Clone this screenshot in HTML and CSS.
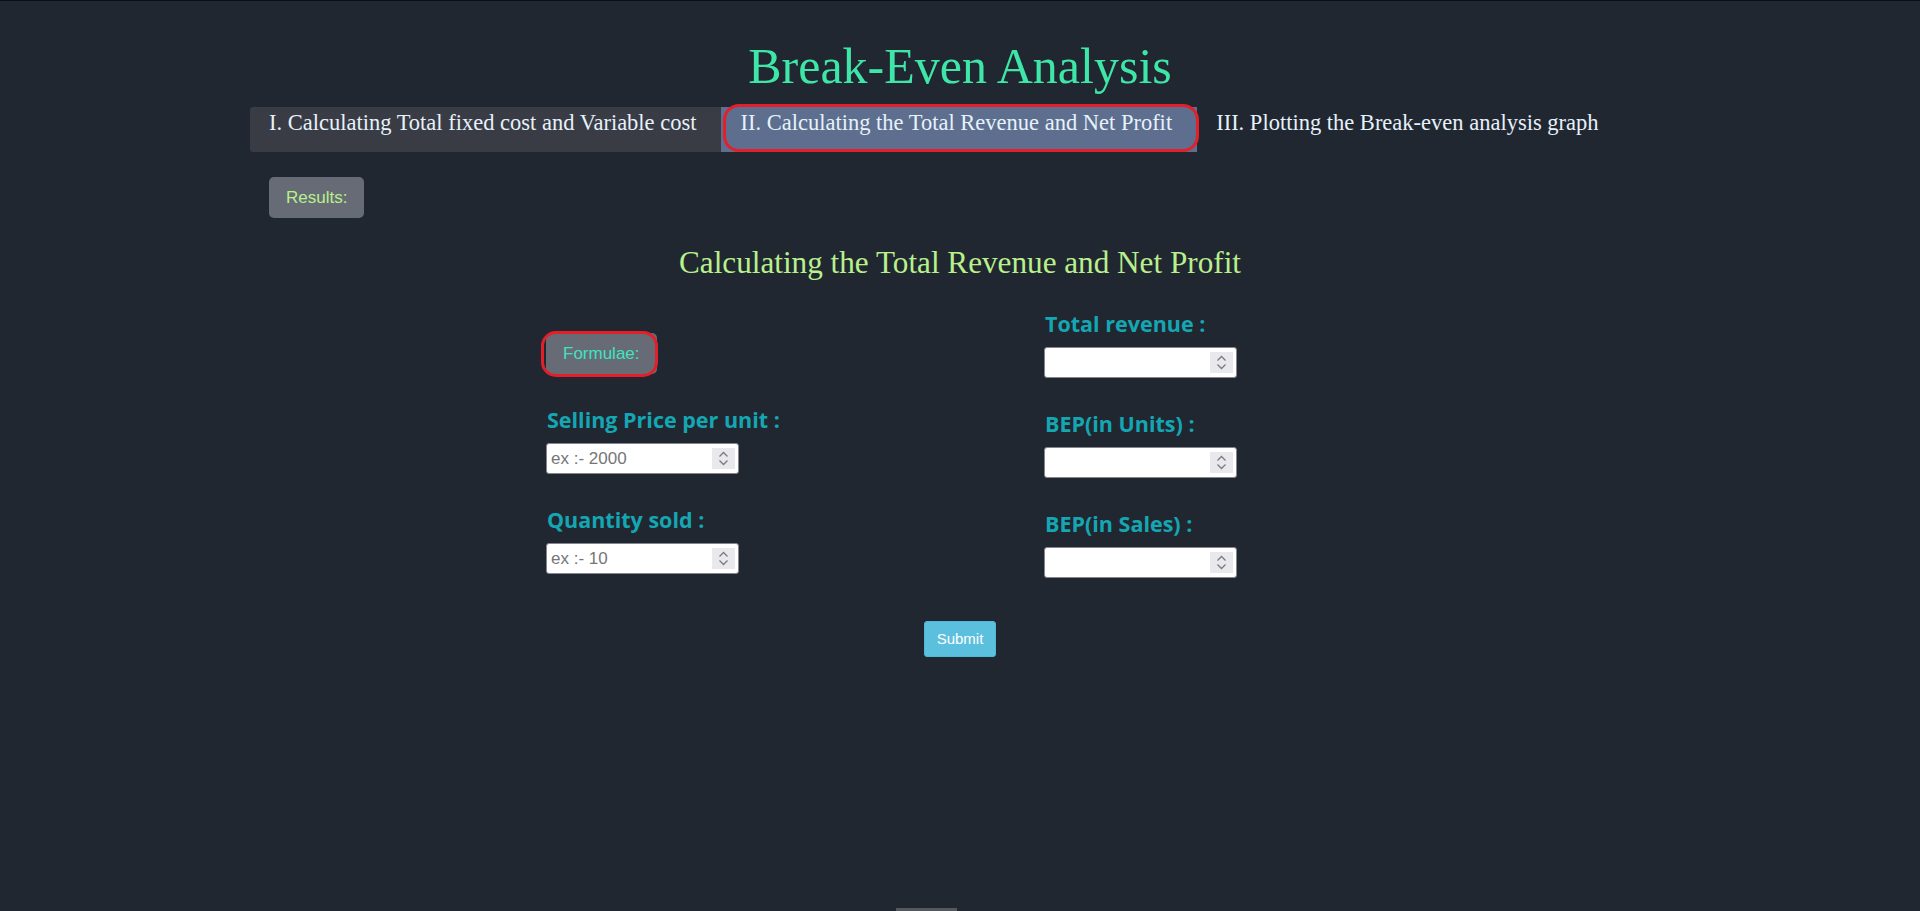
FILE: index.html
```html
<!DOCTYPE html>
<html lang="en">
<head>
<meta charset="utf-8">
<title>Break-Even Analysis</title>
<link rel="stylesheet" href="styles.css">
</head>
<body>
<div class="page">
  <h1 class="title">Break-Even Analysis</h1>
  <ul class="tabs">
    <li class="tab tab-done">I. Calculating Total fixed cost and Variable cost</li>
    <li class="tab tab-active">II. Calculating the Total Revenue and Net Profit</li>
    <li class="tab">III. Plotting the Break-even analysis graph</li>
  </ul>
  <div class="results-row">
    <span class="pill pill-results">Results:</span>
  </div>
  <h2 class="section-title">Calculating the Total Revenue and Net Profit</h2>
  <form class="form-grid">
    <div class="col col-left">
      <div class="formulae-row"><span class="pill pill-formulae">Formulae:</span></div>
      <div class="group">
        <label class="label">Selling Price per unit :</label>
        <div class="field">
          <input class="num" type="number" placeholder="ex :- 2000">
          <span class="spin"><svg width="23" height="21" viewBox="0 0 23 21"><polyline points="7.5,8.5 11.5,4.5 15.5,8.5" /><polyline points="7.5,12.5 11.5,16.5 15.5,12.5" /></svg></span>
        </div>
      </div>
      <div class="group">
        <label class="label">Quantity sold :</label>
        <div class="field">
          <input class="num" type="number" placeholder="ex :- 10">
          <span class="spin"><svg width="23" height="21" viewBox="0 0 23 21"><polyline points="7.5,8.5 11.5,4.5 15.5,8.5" /><polyline points="7.5,12.5 11.5,16.5 15.5,12.5" /></svg></span>
        </div>
      </div>
    </div>
    <div class="col col-right">
      <div class="group">
        <label class="label">Total revenue :</label>
        <div class="field">
          <input class="num" type="number">
          <span class="spin"><svg width="23" height="21" viewBox="0 0 23 21"><polyline points="7.5,8.5 11.5,4.5 15.5,8.5" /><polyline points="7.5,12.5 11.5,16.5 15.5,12.5" /></svg></span>
        </div>
      </div>
      <div class="group">
        <label class="label">BEP(in Units) :</label>
        <div class="field">
          <input class="num" type="number">
          <span class="spin"><svg width="23" height="21" viewBox="0 0 23 21"><polyline points="7.5,8.5 11.5,4.5 15.5,8.5" /><polyline points="7.5,12.5 11.5,16.5 15.5,12.5" /></svg></span>
        </div>
      </div>
      <div class="group">
        <label class="label">BEP(in Sales) :</label>
        <div class="field">
          <input class="num" type="number">
          <span class="spin"><svg width="23" height="21" viewBox="0 0 23 21"><polyline points="7.5,8.5 11.5,4.5 15.5,8.5" /><polyline points="7.5,12.5 11.5,16.5 15.5,12.5" /></svg></span>
        </div>
      </div>
    </div>
  </form>
  <div class="submit-row">
    <button class="submit" type="button">Submit</button>
  </div>
  <div class="peek"></div>
</div>
</body>
</html>
```
FILE: styles.css
```css
html, body {
  margin: 0;
  padding: 0;
}
body {
  background: #212731;
  border-top: 1px solid #0c0e12;
  font-family: "Liberation Serif", "Times New Roman", serif;
  overflow: hidden;
}
.page {
  width: 1420px;
  margin: 0 auto;
}
.title {
  margin: 37px 0 0;
  font-size: 50px;
  line-height: 57px;
  font-weight: normal;
  text-align: center;
  color: #3ee6a8;
}
.tabs {
  display: flex;
  list-style: none;
  margin: 12px 0 0;
  padding: 0;
}
.tab {
  padding: 3px 25px 16px 19px;
  font-size: 22.5px;
  line-height: 26px;
  color: #e6f2fb;
}
.tab-done {
  background: #393c45;
  border-radius: 3px 0 0 3px;
}
.tab-active {
  position: relative;
  background: #5d6e8f;
}
.tab-active::after {
  content: "";
  position: absolute;
  top: -3px;
  left: 2px;
  right: -2px;
  bottom: 0;
  border: 3px solid #e51f2a;
  border-radius: 16px;
}
.results-row {
  display: flex;
  margin-top: 25px;
  padding-left: 19px;
}
.pill {
  display: block;
  height: 41px;
  padding: 0 17px;
  line-height: 41px;
  font-family: "Liberation Sans", Arial, sans-serif;
  font-size: 17px;
  background: #676b75;
  border-radius: 5px;
}
.pill-results {
  color: #b8f08c;
}
.pill-formulae {
  position: relative;
  color: #3fe3c2;
}
.pill-formulae::after {
  content: "";
  position: absolute;
  top: -2px;
  left: -5px;
  right: -1px;
  bottom: -3px;
  border: 3px solid #e51f2a;
  border-radius: 15px;
}
.section-title {
  margin: 27px 0 0;
  font-size: 31.2px;
  line-height: 36px;
  font-weight: normal;
  text-align: center;
  color: #b8f08c;
}
.form-grid {
  display: grid;
  grid-template-columns: 498px 498px;
  margin: 19px 0 0;
  padding-left: 296px;
}
.col {
  display: flex;
  flex-direction: column;
}
.col-left {
  padding-top: 33px;
}
.col-right {
  padding-top: 12px;
}
.formulae-row {
  display: flex;
}
.group {
  display: flex;
  flex-direction: column;
  align-items: flex-start;
}
.col-left .group,
.group + .group {
  margin-top: 34px;
}
.label {
  display: block;
  margin: 0 0 11px 1px;
  font-family: "Open Sans", Lato, sans-serif;
  font-weight: 700;
  font-size: 21.5px;
  line-height: 24px;
  color: #14a7b3;
}
.field {
  position: relative;
  width: 193px;
  height: 31px;
}
.num {
  display: block;
  width: 100%;
  height: 100%;
  box-sizing: border-box;
  margin: 0;
  padding: 0 30px 0 4px;
  border: 1px solid #85858f;
  border-radius: 3px;
  background: #fff;
  font-family: "Liberation Sans", Arial, sans-serif;
  font-size: 17px;
  color: #222;
  -moz-appearance: textfield;
}
.num::-webkit-outer-spin-button,
.num::-webkit-inner-spin-button {
  -webkit-appearance: none;
  margin: 0;
}
.num::placeholder {
  color: #767676;
}
.spin {
  position: absolute;
  top: 5px;
  right: 4px;
  width: 23px;
  height: 21px;
  background: #e9e9ed;
}
.spin svg {
  display: block;
  fill: none;
  stroke: #7a7a80;
  stroke-width: 1.3;
}
.submit-row {
  display: flex;
  justify-content: center;
  margin-top: 43px;
}
.submit {
  margin: 0;
  padding: 6px 12px;
  border: 1px solid #4fb9d9;
  border-radius: 3px;
  background: #5bc0de;
  color: #fff;
  font-family: "Liberation Sans", Arial, sans-serif;
  font-size: 15px;
  line-height: 22px;
}
.peek {
  width: 61px;
  height: 3px;
  margin: 251px 0 0 646px;
  background: #55585e;
}
```
